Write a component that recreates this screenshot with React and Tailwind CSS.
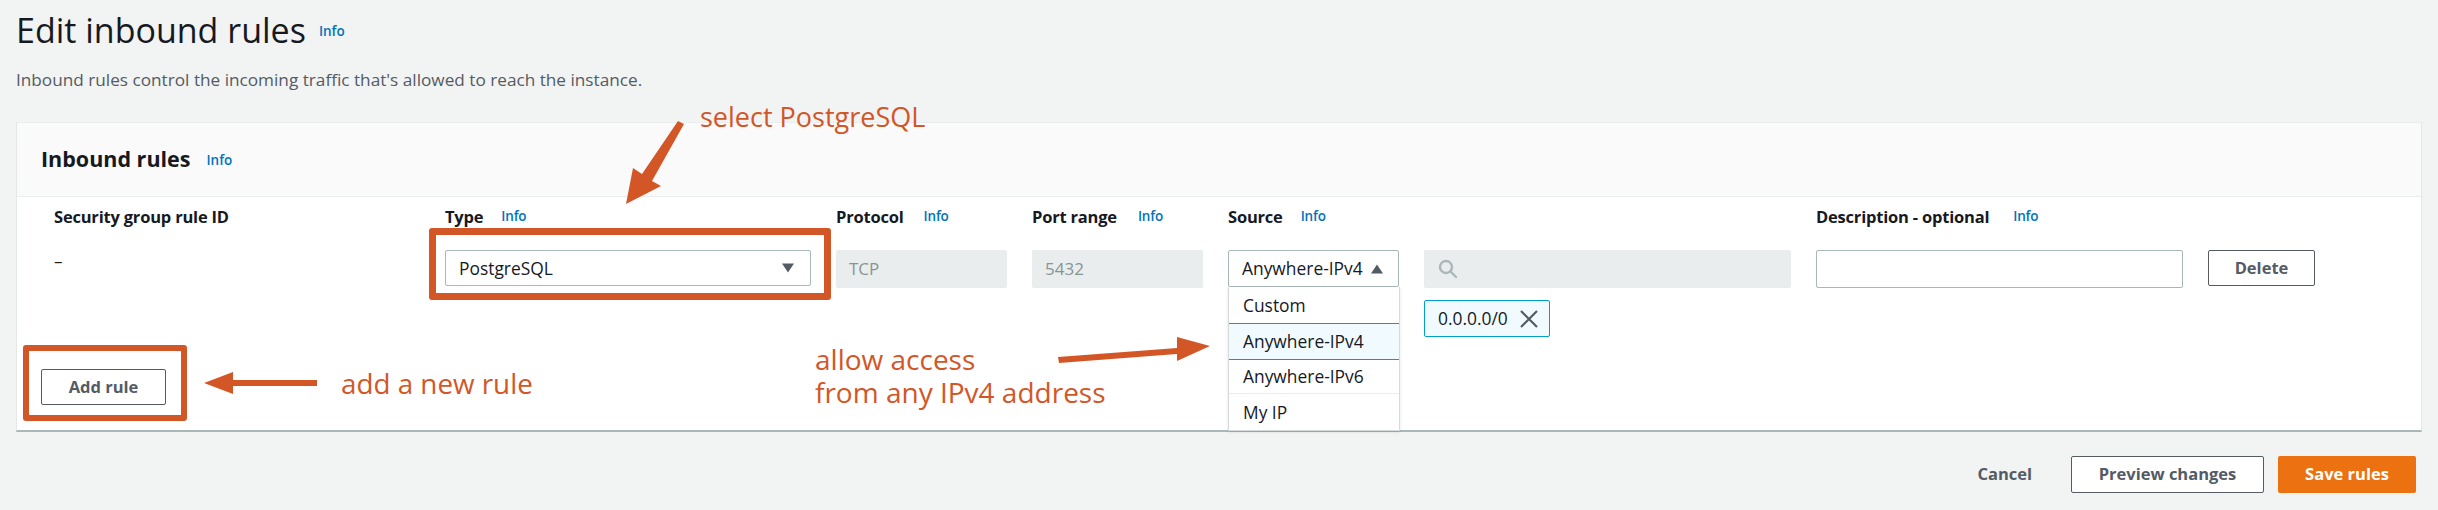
import React from 'react';

const Info = ({ className = '' }) => (
  <span className={`text-[13.5px] leading-none font-semibold text-[#0073bb] ${className}`}>Info</span>
);

const Label = ({ children, gap }) => (
  <div className="flex items-center h-[20px] text-[16.5px] font-bold text-[#16191f] whitespace-nowrap tracking-[-0.2px]">
    {children}
    {gap && <Info className={gap} />}
  </div>
);

const Caret = ({ up }) => (
  <svg width="14" height="10" viewBox="0 0 14 10" className="shrink-0">
    <path d={up ? 'M1 9.5 L7 .5 L13 9.5 Z' : 'M1 .5 L13 .5 L7 9.5 Z'} fill="#545b64" />
  </svg>
);

const disabledBox = 'h-[38px] rounded-[2px] bg-[#eaeded] flex items-center px-[13px] text-[17px] text-[#879596]';
const outlineBtn = 'flex items-center justify-center rounded-[2px] border border-[#545b64] bg-white text-[16.5px] font-bold text-[#545b64]';

const sourceOptions = [
  { name: 'Custom', cls: 'h-[36px]' },
  { name: 'Anywhere-IPv4', cls: 'h-[37px] border-y border-[#00a1c9] bg-[#f1faff]' },
  { name: 'Anywhere-IPv6', cls: 'h-[34px] border-b border-[#eaeded]' },
  { name: 'My IP', cls: 'h-[36px]' }
];

export default function App() {
  return (
    <div className="relative w-[2438px] h-[510px] overflow-hidden bg-[#f2f3f3] font-['Open_Sans',sans-serif]">
      {/* Page heading */}
      <div className="pl-4 pt-[8px] h-[122px]">
        <div className="flex items-center h-[44px]">
          <h1 className="text-[34px] leading-[44px] text-[#16191f]">Edit inbound rules</h1>
          <Info className="ml-[13px] mt-[4px]" />
        </div>
        <p className="mt-[17px] text-[17.2px] leading-[22px] text-[#545b64]">
          Inbound rules control the incoming traffic that's allowed to reach the instance.
        </p>
      </div>

      {/* Card */}
      <div className="mx-4 h-[310px] bg-white border-x border-[#e4e7e7] border-b-2 border-b-[#aab7b8]">
        <div className="h-[75px] bg-[#fafafa] border-y border-[#eaeded] flex items-center pl-[24px]">
          <h2 className="text-[21.5px] font-bold text-[#16191f]">Inbound rules</h2>
          <Info className="ml-[16px] mt-[2px]" />
        </div>
        <div className="grid grid-cols-[366px_366px_171px_171px_171px_367px_367px_107px] gap-x-[25px] gap-y-[23px] pl-[37px] pt-[10px]">
          <Label>Security group rule ID</Label>
          <Label gap="ml-[18px]">Type</Label>
          <Label gap="ml-[20px]">Protocol</Label>
          <Label gap="ml-[21px]">Port range</Label>
          <Label gap="ml-[18px]">Source</Label>
          <div />
          <Label gap="ml-[24px]">Description - optional</Label>
          <div />

          <div className="text-[17px] leading-[22px] text-[#16191f]">–</div>
          <div className="h-[36px] rounded-[2px] border border-[#aab7b8] flex items-center justify-between pl-[13px] pr-[15px] text-[17.4px] text-[#16191f]">
            PostgreSQL <Caret />
          </div>
          <div className={disabledBox}>TCP</div>
          <div className={disabledBox}>5432</div>
          <div className="relative h-[37px] rounded-[2px] border border-[#aab7b8] flex items-center justify-between pl-[13px] pr-[14px] text-[17.4px] text-[#16191f] whitespace-nowrap">
            Anywhere-IPv4 <Caret up />
            {/* Open dropdown menu */}
            <div className="absolute left-[-1px] top-[36px] w-[172px] bg-white border-x border-b border-[#d5dbdb] shadow-sm">
              {sourceOptions.map(opt => (
                <div key={opt.name} className={`flex items-center pl-[14px] ${opt.cls}`}>{opt.name}</div>
              ))}
            </div>
          </div>
          <div>
            <div className="h-[38px] rounded-[2px] bg-[#eaeded] flex items-center pl-[14px]">
              <svg width="20" height="20" viewBox="0 0 20 20" fill="none" stroke="#aab7b8" strokeWidth="2.4">
                <circle cx="8" cy="8" r="6" />
                <path d="M12.5 12.5 L18 18" strokeLinecap="round" />
              </svg>
            </div>
            <div className="mt-[12px] w-[126px] h-[37px] rounded-[2px] border border-[#00a1c9] bg-[#f1faff] flex items-center pl-[13px] text-[17.4px] text-[#16191f]">
              0.0.0.0/0
              <svg width="20" height="20" viewBox="0 0 20 20" className="ml-[11px] shrink-0" fill="none" stroke="#545b64" strokeWidth="2.2">
                <path d="M2 2 L18 18 M18 2 L2 18" />
              </svg>
            </div>
          </div>
          <div className="h-[38px] rounded-[2px] border border-[#aab7b8] bg-white" />
          <div className={`${outlineBtn} h-[36px]`}>Delete</div>
        </div>
      </div>

      {/* Footer actions */}
      <div className="flex items-center justify-end gap-[14px] pr-[22px] mt-[24px]">
        <span className="mr-[25px] text-[16.5px] font-bold text-[#545b64]">Cancel</span>
        <div className={`${outlineBtn} w-[193px] h-[37px]`}>Preview changes</div>
        <div className="w-[138px] h-[37px] rounded-[2px] bg-[#ec7211] flex items-center justify-center text-[16.5px] font-bold text-white">
          Save rules
        </div>
      </div>

      {/* Add rule button sits over the card's empty lower area */}
      <div className={`${outlineBtn} absolute left-[41px] top-[369px] w-[125px] h-[36px]`}>Add rule</div>

      {/* Red annotations */}
      <div className="absolute left-[429px] top-[228px] w-[402px] h-[72px] rounded-[3px] border-[7px] border-[#d35627]" />
      <div className="absolute left-[23px] top-[345px] w-[164px] h-[76px] rounded-[3px] border-[6px] border-[#d35627]" />
      <svg className="absolute inset-0 pointer-events-none" width="2438" height="510" viewBox="0 0 2438 510" fill="#d35627">
        <polygon points="678,121 684,124 652,181 661,186 626,204 633,168 642,174" />
        <polygon points="204,383 233,372 233,380 317,380 317,386 233,386 233,394" />
        <polygon points="1058,357 1177,348 1177,337 1210,346 1177,361 1177,354 1059,363" />
      </svg>
      <div className="absolute left-[700px] top-[98px] text-[27px] leading-[38px] text-[#d35627] whitespace-nowrap">select PostgreSQL</div>
      <div className="absolute left-[341px] top-[364px] text-[27.8px] leading-[38px] text-[#d35627] whitespace-nowrap">add a new rule</div>
      <div className="absolute left-[815px] top-[343px] text-[28px] leading-[33px] text-[#d35627] whitespace-nowrap">
        allow access<br />from any IPv4 address
      </div>
    </div>
  );
}
